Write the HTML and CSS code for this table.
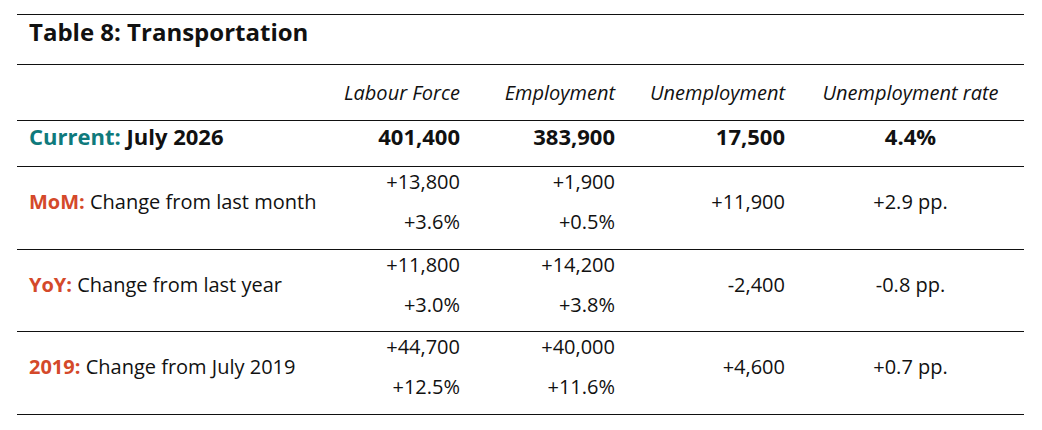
FILE: index.html
```html
<!DOCTYPE html>
<html>
<head>
<meta charset="utf-8">
<link rel="stylesheet" href="styles.css">
</head>
<body>
<div class="wrap">
  <div class="title">Table 8: Transportation</div>
  <table class="tbl">
    <colgroup>
      <col class="c-label">
      <col class="c-lf">
      <col class="c-emp">
      <col class="c-unemp">
      <col class="c-rate">
    </colgroup>
    <thead>
      <tr class="head">
        <th></th>
        <th class="num">Labour Force</th>
        <th class="num">Employment</th>
        <th class="num">Unemployment</th>
        <th class="ctr">Unemployment rate</th>
      </tr>
    </thead>
    <tbody>
      <tr class="current">
        <td class="label"><span class="teal">Current:</span> July 2026</td>
        <td class="num">401,400</td>
        <td class="num">383,900</td>
        <td class="num">17,500</td>
        <td class="ctr">4.4%</td>
      </tr>
      <tr class="change">
        <td class="label"><span class="orange">MoM:</span> Change from last month</td>
        <td class="num"><div class="ln">+13,800</div><div class="ln">+3.6%</div></td>
        <td class="num"><div class="ln">+1,900</div><div class="ln">+0.5%</div></td>
        <td class="num">+11,900</td>
        <td class="ctr">+2.9 pp.</td>
      </tr>
      <tr class="change">
        <td class="label"><span class="orange">YoY:</span> Change from last year</td>
        <td class="num"><div class="ln">+11,800</div><div class="ln">+3.0%</div></td>
        <td class="num"><div class="ln">+14,200</div><div class="ln">+3.8%</div></td>
        <td class="num">-2,400</td>
        <td class="ctr">-0.8 pp.</td>
      </tr>
      <tr class="change">
        <td class="label"><span class="orange">2019:</span> Change from July 2019</td>
        <td class="num"><div class="ln">+44,700</div><div class="ln">+12.5%</div></td>
        <td class="num"><div class="ln">+40,000</div><div class="ln">+11.6%</div></td>
        <td class="num">+4,600</td>
        <td class="ctr">+0.7 pp.</td>
      </tr>
    </tbody>
  </table>
</div>
</body>
</html>
```
FILE: styles.css
```css
html, body {
  margin: 0;
  padding: 0;
  background: #ffffff;
}
body {
  font-family: "Open Sans", "Liberation Sans", sans-serif;
  color: #111111;
}
.wrap {
  margin: 14px 18px 0 17px;
  width: 1007px;
  border-top: 1px solid #111111;
}
.title {
  box-sizing: border-box;
  height: 50px;
  font-size: 24px;
  font-weight: 700;
  line-height: 32px;
  padding: 1px 12px 0 12px;
  border-bottom: 1px solid #111111;
}
.tbl {
  width: 1007px;
  border-collapse: collapse;
  table-layout: fixed;
  font-size: 20px;
}
.c-label { width: 300px; }
.c-lf { width: 155px; }
.c-emp { width: 155px; }
.c-unemp { width: 170px; }
.c-rate { width: 227px; }
.tbl th, .tbl td {
  padding: 0 12px;
  vertical-align: middle;
  border-bottom: 1px solid #111111;
}
.tbl td.label {
  white-space: nowrap;
  padding-right: 0;
}
.head th {
  font-style: italic;
  font-weight: 400;
  font-size: 20px;
  line-height: 31px;
  padding-top: 12px;
  padding-bottom: 12px;
}
.current td {
  font-weight: 700;
  font-size: 22px;
  line-height: 30px;
  padding-bottom: 15px;
}
.change td {
  line-height: 30px;
  padding-bottom: 11.5px;
}
.ln + .ln {
  margin-top: 10px;
}
.num { text-align: right; }
.ctr { text-align: center; }
.teal { color: #0f7a7c; font-weight: 700; }
.orange { color: #d4492a; font-weight: 700; }
```
